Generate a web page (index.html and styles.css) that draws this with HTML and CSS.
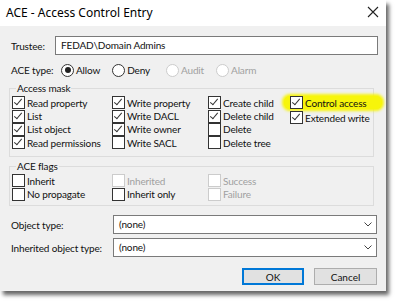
FILE: index.html
```html
<!DOCTYPE html>
<html lang="en">
<head>
    <meta charset="UTF-8">
    <title>ACE - Access Control Entry</title>
    <link rel="stylesheet" href="styles.css">
</head>
<body>
    <div class="window">
        <div class="titlebar">
            <span class="title">ACE - Access Control Entry</span>
            <svg class="close" width="12" height="12" viewBox="0 0 12 12">
                <path d="M1 1 L11 11 M11 1 L1 11" stroke="#222" stroke-width="1.1" fill="none"/>
            </svg>
        </div>
        <div class="content">
            <div class="field-row">
                <label class="lbl-trustee">Trustee:</label>
                <div class="textbox">FEDAD\Domain Admins</div>
            </div>
            <div class="type-row">
                <span class="lbl-type">ACE type:</span>
                <span class="radio-item"><span class="radio checked"></span>Allow</span>
                <span class="radio-item"><span class="radio"></span>Deny</span>
                <span class="radio-item disabled"><span class="radio"></span>Audit</span>
                <span class="radio-item disabled"><span class="radio"></span>Alarm</span>
            </div>

            <fieldset class="group mask">
                <legend>Access mask</legend>
                <div class="check-grid">
                    <div class="col c1">
                        <span class="check on"><i></i>Read property</span>
                        <span class="check on"><i></i>List</span>
                        <span class="check on"><i></i>List object</span>
                        <span class="check on"><i></i>Read permissions</span>
                    </div>
                    <div class="col c2">
                        <span class="check on"><i></i>Write property</span>
                        <span class="check on"><i></i>Write DACL</span>
                        <span class="check on"><i></i>Write owner</span>
                        <span class="check"><i></i>Write SACL</span>
                    </div>
                    <div class="col c3">
                        <span class="check on"><i></i>Create child</span>
                        <span class="check on"><i></i>Delete child</span>
                        <span class="check"><i></i>Delete</span>
                        <span class="check"><i></i>Delete tree</span>
                    </div>
                    <div class="col c4">
                        <span class="check on marked"><i></i>Control access</span>
                        <span class="check on"><i></i>Extended write</span>
                    </div>
                </div>
            </fieldset>

            <fieldset class="group flags">
                <legend>ACE flags</legend>
                <div class="check-grid">
                    <div class="col c1">
                        <span class="check"><i></i>Inherit</span>
                        <span class="check"><i></i>No propagate</span>
                    </div>
                    <div class="col c2">
                        <span class="check disabled"><i></i>Inherited</span>
                        <span class="check"><i></i>Inherit only</span>
                    </div>
                    <div class="col c3">
                        <span class="check disabled"><i></i>Success</span>
                        <span class="check disabled"><i></i>Failure</span>
                    </div>
                </div>
            </fieldset>

            <div class="select-row first">
                <span class="lbl-select">Object type:</span>
                <div class="select">(none)<svg class="chev" width="8" height="5" viewBox="0 0 8 5"><path d="M0.5 0.5 L4 4 L7.5 0.5" stroke="#444" fill="none"/></svg></div>
            </div>
            <div class="select-row">
                <span class="lbl-select">Inherited object type:</span>
                <div class="select">(none)<svg class="chev" width="8" height="5" viewBox="0 0 8 5"><path d="M0.5 0.5 L4 4 L7.5 0.5" stroke="#444" fill="none"/></svg></div>
            </div>

            <div class="buttons">
                <button class="btn default">OK</button>
                <button class="btn">Cancel</button>
            </div>
        </div>
    </div>
</body>
</html>
```

FILE: styles.css
```css
body {
    margin: 0;
    background: #fff;
    font-family: Lato, "Noto Sans", sans-serif;
    font-size: 10px;
    letter-spacing: -0.15px;
    color: #111;
    width: 400px;
    height: 308px;
    overflow: hidden;
}
.window {
    width: 386px;
    height: 291px;
    background: #f0f0f0;
    box-shadow: 3px 4px 4px rgba(0,0,0,0.6);
}
.titlebar {
    height: 26px;
    background: #fff;
    display: flex;
    align-items: center;
    justify-content: space-between;
    padding: 0 7px 0 6px;
}
.title {
    font-family: "Noto Sans", sans-serif;
    font-size: 12px;
    letter-spacing: 0;
    color: #000;
    margin-top: -2px;
}
.close {
    margin-top: -2px;
}
.content {
    padding: 10px 8px 0 11px;
}
.field-row {
    display: flex;
    align-items: center;
}
.lbl-trustee {
    width: 44px;
}
.textbox {
    width: 316px;
    height: 17px;
    border: 1px solid #7a7a7a;
    background: #fff;
    line-height: 17px;
    padding-left: 5px;
}
.type-row {
    display: flex;
    align-items: center;
    height: 14px;
    margin-top: 8px;
}
.lbl-type {
    width: 50px;
}
.radio-item {
    display: flex;
    align-items: center;
    margin-right: 12px;
}
.radio-item:nth-child(3) {
    margin-right: 16px;
}
.radio {
    width: 11px;
    height: 11px;
    border: 1px solid #333;
    border-radius: 50%;
    background: #fff;
    margin-right: 2px;
    position: relative;
}
.radio.checked::after {
    content: "";
    position: absolute;
    left: 2.5px;
    top: 2.5px;
    width: 6px;
    height: 6px;
    border-radius: 50%;
    background: #222;
}
.radio-item.disabled {
    color: #a0a0a0;
}
.radio-item.disabled .radio {
    border-color: #ccc;
}
.group {
    border: 1px solid #dcdcdc;
    margin: 0 0 0 -2px;
    padding: 0 0 0 2px;
    width: 365px;
    box-sizing: border-box;
}
.group legend {
    padding: 0 1px;
    margin-left: 4px;
    line-height: 11px;
}
.mask {
    margin-top: 6px;
    height: 74px;
}
.flags {
    margin-top: 4px;
    height: 45px;
}
.check-grid {
    display: flex;
    padding-top: 2px;
}
.col {
    display: flex;
    flex-direction: column;
}
.c1 { width: 100px; }
.c2 { width: 96px; }
.c3 { width: 82px; }
.check {
    display: flex;
    align-items: center;
    height: 13.4px;
    white-space: nowrap;
}
.check i {
    width: 11px;
    height: 11px;
    border: 1px solid #333;
    background: #fff;
    margin-right: 2px;
    position: relative;
    flex: none;
}
.check.on i::after {
    content: "";
    position: absolute;
    left: 3px;
    top: 0px;
    width: 3px;
    height: 7px;
    border: solid #333;
    border-width: 0 1.2px 1.2px 0;
    transform: rotate(40deg);
}
.check.disabled {
    color: #a0a0a0;
}
.check.disabled i {
    border-color: #ccc;
}
.c4 .check:nth-child(2) {
    margin-top: 1.5px;
}
.check.marked {
    background: #f7f50a;
    border-radius: 6px;
    margin: 0 -12px 0 -6px;
    padding: 0 12px 0 6px;
    box-shadow: 0 0 3px 2px #f7f50a;
}
.select-row {
    display: flex;
    align-items: center;
    margin-top: 4px;
}
.select-row.first {
    margin-top: 9px;
}
.lbl-select {
    width: 102px;
}
.select {
    width: 257px;
    height: 17px;
    border: 1px solid #7a7a7a;
    background: #fff;
    line-height: 17px;
    padding-left: 5px;
    display: flex;
    align-items: center;
    justify-content: space-between;
}
.chev {
    margin-right: 4px;
}
.buttons {
    display: flex;
    justify-content: flex-end;
    gap: 10px;
    margin-top: 11px;
    padding-right: 1px;
}
.btn {
    font-family: inherit;
    font-size: 10px;
    height: 17px;
    background: #e1e1e1;
    border: 1px solid #adadad;
    color: #111;
    padding: 0;
    width: 63px;
}
.btn.default {
    width: 62px;
    border: 2px solid #0078d7;
}
```
